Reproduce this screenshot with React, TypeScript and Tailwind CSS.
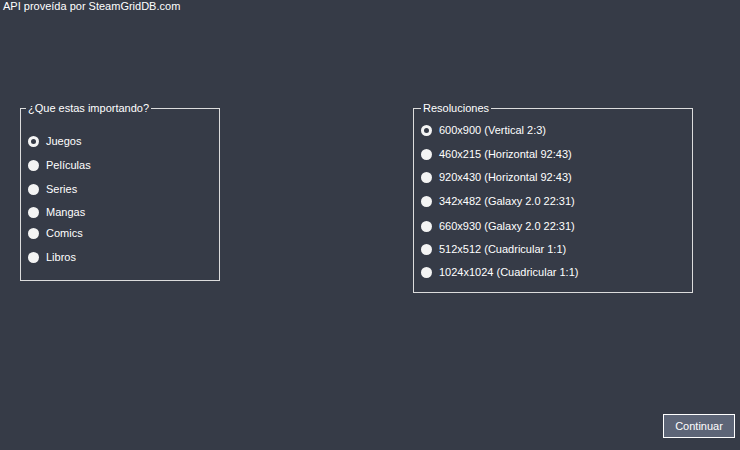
import React from "react";

// Windows-Forms style import dialog: two group boxes of radio options + continue button

const tipos = [
  { label: "Juegos", mt: "mt-[20px]", checked: true },
  { label: "Películas", mt: "mt-[11px]" },
  { label: "Series", mt: "mt-[11px]" },
  { label: "Mangas", mt: "mt-[10px]" },
  { label: "Comics", mt: "mt-[8px]" },
  { label: "Libros", mt: "mt-[11px]" },
];

const resoluciones = [
  { label: "600x900 (Vertical 2:3)", mt: "mt-[9px]", checked: true },
  { label: "460x215 (Horizontal 92:43)", mt: "mt-[11px]" },
  { label: "920x430 (Horizontal 92:43)", mt: "mt-[10px]" },
  { label: "342x482 (Galaxy 2.0 22:31)", mt: "mt-[11px]" },
  { label: "660x930 (Galaxy 2.0 22:31)", mt: "mt-[12px]" },
  { label: "512x512 (Cuadricular 1:1)", mt: "mt-[10px]" },
  { label: "1024x1024 (Cuadricular 1:1)", mt: "mt-[10px]" },
];

type Opt = { label: string; mt: string; checked?: boolean };

const Radio: React.FC<{ opt: Opt; pad: string }> = ({ opt, pad }) => (
  <div className={`flex items-center h-[13px] ${opt.mt} ${pad}`}>
    <span className="w-[11px] h-[11px] rounded-full bg-[#f4f4f4] flex items-center justify-center flex-shrink-0">
      {opt.checked && <span className="w-[5px] h-[5px] rounded-full bg-[#363b47]" />}
    </span>
    <span className="ml-[7px] text-white">{opt.label}</span>
  </div>
);

export default function App() {
  return (
    <div
      className="w-[740px] h-[450px] bg-[#363b47] text-white text-[11px] leading-[13px] flex flex-col overflow-hidden"
      style={{ fontFamily: '"Liberation Sans", Arial, sans-serif' }}
    >
      <div className="pl-[3px] h-[13px]">API proveída por SteamGridDB.com</div>

      <div className="flex items-start mt-[89px] pl-[20px]">
        {/* ── Tipo ── */}
        <fieldset className="w-[200px] h-[179px] border border-[#dcdcdc] flex flex-col">
          <legend className="ml-[5px] px-[2px] leading-[13px]">¿Que estas importando?</legend>
          {tipos.map((t) => (
            <Radio key={t.label} opt={t} pad="pl-[7px]" />
          ))}
        </fieldset>

        {/* ── Resoluciones ── */}
        <fieldset className="ml-[193px] w-[280px] h-[191px] border border-[#dcdcdc] flex flex-col">
          <legend className="ml-[7px] px-[2px] leading-[13px]">Resoluciones</legend>
          {resoluciones.map((r) => (
            <Radio key={r.label} opt={r} pad="pl-[7px]" />
          ))}
        </fieldset>
      </div>

      <div className="flex-1" />

      <div className="flex justify-end pr-[5px] pb-[12px]">
        <button className="w-[72px] h-[24px] bg-[#5d6577] border border-white text-white text-[11px] leading-[13px] flex items-center justify-center">
          Continuar
        </button>
      </div>
    </div>
  );
}
